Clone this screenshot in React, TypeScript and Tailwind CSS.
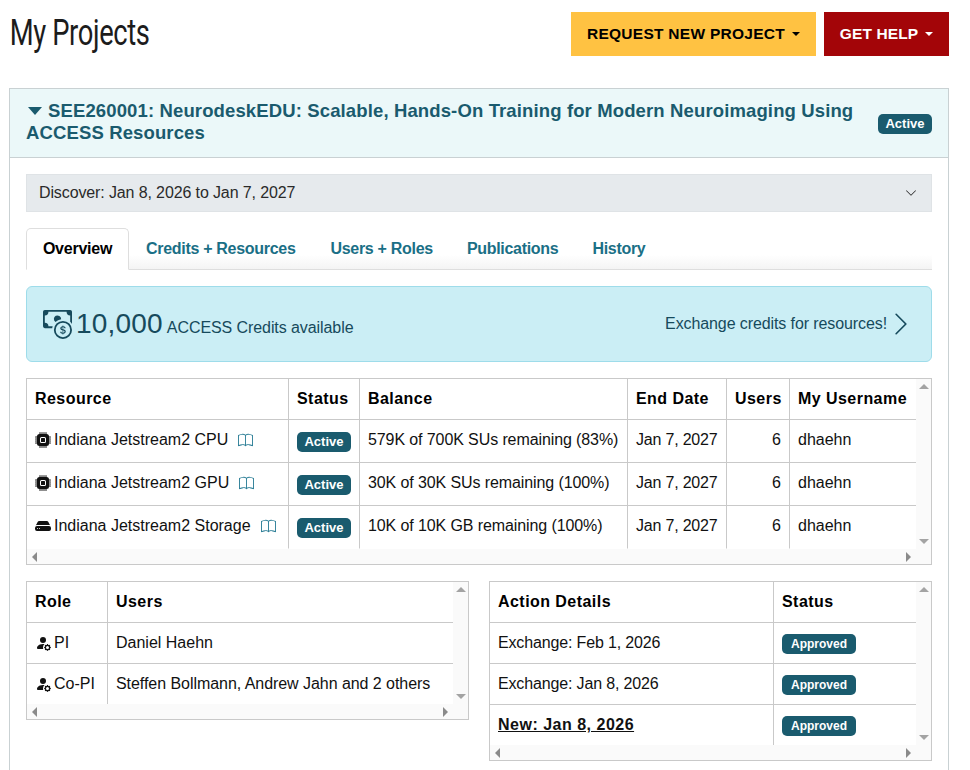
import { BsBook, BsCashCoin, BsChevronDown, BsChevronRight, BsCpuFill, BsHddFill, BsPersonFillGear } from "react-icons/bs";
import type { ReactNode } from "react";

const body = "font-['Liberation_Sans','Arial',sans-serif]";

function Caret({ className }: { className: string }) {
  return <span className={`inline-block w-0 h-0 border-x-[4px] border-x-transparent border-t-[4px] ${className}`} />;
}

function Badge({ text, className = "" }: { text: string; className?: string }) {
  return (
    <span className={`inline-flex items-center justify-center h-5 rounded-[5px] bg-[#1a5b6e] text-white text-[12px] font-bold ${className}`}>
      {text}
    </span>
  );
}

function Arrow({ dir, className = "" }: { dir: "up" | "down" | "left" | "right"; className?: string }) {
  const shape = {
    up: "border-x-[5px] border-x-transparent border-b-[5px] border-b-[#a3a3a3]",
    down: "border-x-[5px] border-x-transparent border-t-[5px] border-t-[#a3a3a3]",
    left: "border-y-[5px] border-y-transparent border-r-[5px] border-r-[#8a8a8a]",
    right: "border-y-[5px] border-y-transparent border-l-[5px] border-l-[#8a8a8a]",
  }[dir];
  return <span className={`block w-0 h-0 ${shape} ${className}`} />;
}

// table box with always-on scrollbars, like the overflow:scroll ones in the page
function ScrollBox({ children, className = "" }: { children: ReactNode; className?: string }) {
  return (
    <div className={`border border-[#c9c9c9] bg-white grid grid-cols-[1fr_15px] grid-rows-[1fr_15px] ${className}`}>
      <div className="overflow-hidden">{children}</div>
      <div className="bg-[#fafafa] flex flex-col items-center justify-between pt-[5px] pb-[5px]">
        <Arrow dir="up" />
        <Arrow dir="down" />
      </div>
      <div className="bg-[#fafafa] flex items-center justify-between px-[5px]">
        <Arrow dir="left" />
        <Arrow dir="right" />
      </div>
      <div className="bg-[#fafafa]" />
    </div>
  );
}

const table = "table-fixed border-separate border-spacing-0";
const th = "h-[41px] px-2 text-left font-bold text-black tracking-[0.45px] border-b border-r border-[#c9c9c9] last:border-r-0";
const td = "px-2 align-middle text-[#111] border-r border-b border-[#c9c9c9] last:border-r-0";
const tdLast = "border-b-transparent";

const resources = [
  { name: "Indiana Jetstream2 CPU", icon: <BsCpuFill size={16} className="shrink-0" />, bal: "579K of 700K SUs remaining (83%)" },
  { name: "Indiana Jetstream2 GPU", icon: <BsCpuFill size={16} className="shrink-0" />, bal: "30K of 30K SUs remaining (100%)" },
  { name: "Indiana Jetstream2 Storage", icon: <BsHddFill size={16} className="shrink-0" />, bal: "10K of 10K GB remaining (100%)" },
];

const actions = [
  { label: "Exchange: Feb 1, 2026", strong: false },
  { label: "Exchange: Jan 8, 2026", strong: false },
  { label: "New: Jan 8, 2026", strong: true },
];

export default function App() {
  return (
    <div className={`${body} w-[970px] h-[770px] overflow-hidden bg-white text-[16px] text-[#111] pl-[9px] pr-[21px] pt-3`}>
      <div className="flex items-start justify-between h-[76px]">
        <h1 className="font-['Roboto',sans-serif] text-[36px] leading-[42px] pl-[1px] text-[#1c1c1c] tracking-[-0.5px] origin-left scale-x-[0.76]">My Projects</h1>
        <div className="flex gap-2">
          <button className="h-11 w-[245px] bg-[#ffc242] text-black font-bold text-[15.500px] tracking-[0.27px] flex items-center justify-center gap-[7px]">
            REQUEST NEW PROJECT <Caret className="border-t-black" />
          </button>
          <button className="h-11 w-[125px] bg-[#a30508] text-white font-bold text-[15.500px] tracking-[0.1px] flex items-center justify-center gap-[7px]">
            GET HELP <Caret className="border-t-white" />
          </button>
        </div>
      </div>

      <section className="border border-[#c9d1d3] border-b-0 h-[700px]">
        <header className="bg-[#ebf8f9] border-b border-[#c9d1d3] h-[69px] pl-4 pr-4 pb-[2px] flex items-center justify-between">
          <h2 className="w-[840px] text-[18.500px] leading-[22px] font-bold text-[#1a5b6e] tracking-[0.13px]">
            <Caret className="border-x-[7px] border-t-[8px] border-t-[#1a5b6e] mb-[2px] ml-[2px] mr-[6px]" />
            SEE260001: NeurodeskEDU: Scalable, Hands-On Training for Modern Neuroimaging Using ACCESS Resources
          </h2>
          <Badge text="Active" className="w-[54px] text-[13px] mt-[3px]" />
        </header>

        <div className="p-4">
          <div className="h-[38px] bg-[#e6eaed] border border-[#dfe3e6] pl-3 pr-[14px] flex items-center justify-between text-[#2a2a2a] text-[16px]">
            <span className="tracking-[-0.12px]">Discover: Jan 8, 2026 to Jan 7, 2027</span>
            <BsChevronDown size={12} className="text-[#222]" />
          </div>

          <nav className="mt-4 h-[42px] flex items-stretch border-b border-[#dedede] font-bold text-[#1a6f86] text-[16px] tracking-[-0.3px] bg-[linear-gradient(to_bottom,transparent_66%,#f4f4f4)]">
            <span className="w-[103px] -mb-px bg-white border border-[#dedede] border-b-white rounded-t-[5px] flex items-center justify-center text-black tracking-[-0.25px]">Overview</span>
            <span className="flex items-center ml-[17px]">Credits + Resources</span>
            <span className="flex items-center ml-[35px]">Users + Roles</span>
            <span className="flex items-center ml-[34px]">Publications</span>
            <span className="flex items-center ml-[34px]">History</span>
          </nav>

          <div className="mt-4 h-[76px] rounded-[6px] bg-[#cbeef5] border border-[#9edcea] pl-4 pr-[17px] flex items-center justify-between text-[#164a5c]">
            <div className="flex items-center">
              <BsCashCoin size={29} className="shrink-0" />
              <span className="text-[28px] ml-[4px] tracking-[0.2px]">10,000</span>
              <span className="text-[16px] ml-[4px] mt-[7px] tracking-[-0.08px]">ACCESS Credits available</span>
            </div>
            <div className="flex items-center gap-[1px]">
              <span className="text-[16px] tracking-[-0.1px]">Exchange credits for resources!</span>
              <BsChevronRight size={26} />
            </div>
          </div>

          <ScrollBox className="mt-4 h-[187px]">
            <table className={`w-[889px] ${table}`}>
              <colgroup>
                <col className="w-[262px]" />
                <col className="w-[71px]" />
                <col className="w-[268px]" />
                <col className="w-[99px]" />
                <col className="w-[63px]" />
                <col className="w-[126px]" />
              </colgroup>
              <thead>
                <tr>
                  <th className={th}>Resource</th>
                  <th className={th}>Status</th>
                  <th className={th}>Balance</th>
                  <th className={th}>End Date</th>
                  <th className={`${th} !text-right`}>Users</th>
                  <th className={th}>My Username</th>
                </tr>
              </thead>
              <tbody>
                {resources.map((r, i) => {
                  const cell = `${td} pb-[2px] ${i === 2 ? tdLast : ""}`;
                  return (
                    <tr key={r.name} className="h-[43px]">
                      <td className={cell}>
                        <div className="flex items-center gap-[3px] whitespace-nowrap">
                          {r.icon}
                          {r.name}
                          <BsBook size={15} className="ml-[7px] text-[#2d7f97] shrink-0" />
                        </div>
                      </td>
                      <td className={cell}><Badge text="Active" className="w-[54px] text-[13px] mt-[5px]" /></td>
                      <td className={`${cell} whitespace-nowrap tracking-[-0.1px]`}>{r.bal}</td>
                      <td className={`${cell} whitespace-nowrap tracking-[-0.2px]`}>Jan 7, 2027</td>
                      <td className={`${cell} text-right`}>6</td>
                      <td className={cell}>dhaehn</td>
                    </tr>
                  );
                })}
              </tbody>
            </table>
          </ScrollBox>

          <div className="mt-4 flex items-start justify-between">
            <ScrollBox className="w-[443px] h-[139px]">
              <table className={`w-[426px] ${table}`}>
                <colgroup>
                  <col className="w-[81px]" />
                  <col />
                </colgroup>
                <thead>
                  <tr>
                    <th className={th}>Role</th>
                    <th className={th}>Users</th>
                  </tr>
                </thead>
                <tbody>
                  <tr className="h-[41px]">
                    <td className={td}><div className="flex items-center gap-[3px]"><BsPersonFillGear size={16} />PI</div></td>
                    <td className={td}>Daniel Haehn</td>
                  </tr>
                  <tr className="h-[41px]">
                    <td className={`${td} ${tdLast}`}><div className="flex items-center gap-[3px]"><BsPersonFillGear size={16} />Co-PI</div></td>
                    <td className={`${td} ${tdLast} whitespace-nowrap tracking-[-0.05px]`}>Steffen Bollmann, Andrew Jahn and 2 others</td>
                  </tr>
                </tbody>
              </table>
            </ScrollBox>

            <ScrollBox className="w-[443px] h-[180px]">
              <table className={`w-[426px] ${table}`}>
                <colgroup>
                  <col className="w-[284px]" />
                  <col />
                </colgroup>
                <thead>
                  <tr>
                    <th className={th}>Action Details</th>
                    <th className={th}>Status</th>
                  </tr>
                </thead>
                <tbody>
                  {actions.map((a, i) => (
                    <tr key={a.label} className="h-[41px]">
                      <td className={`${td} ${i === 2 ? tdLast : ""}`}>
                        {a.strong ? <span className="font-bold underline tracking-[0.5px]">{a.label}</span> : <span className="tracking-[-0.15px]">{a.label}</span>}
                      </td>
                      <td className={`${td} ${i === 2 ? tdLast : ""}`}><Badge text="Approved" className="w-[74px] mt-[3px]" /></td>
                    </tr>
                  ))}
                </tbody>
              </table>
            </ScrollBox>
          </div>
        </div>
      </section>
    </div>
  );
}
